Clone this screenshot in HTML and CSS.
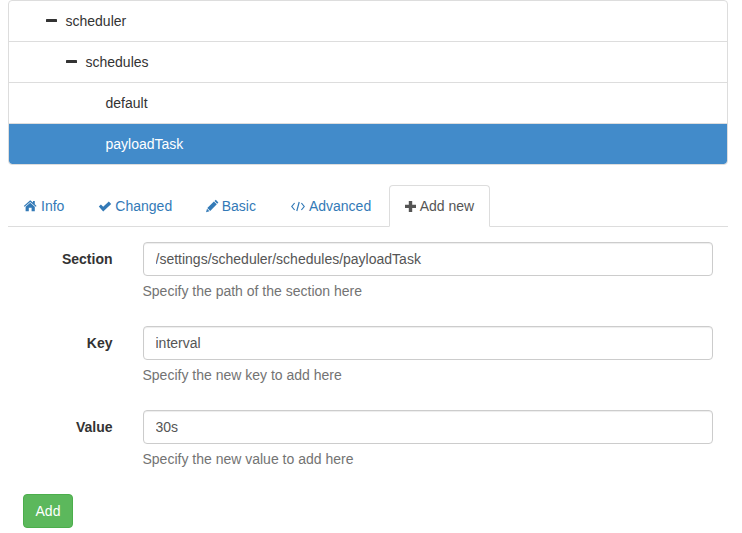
FILE: index.html
```html
<!DOCTYPE html>
<html lang="en">

<head>
    <meta charset="UTF-8">
    <meta name="viewport" content="width=device-width, initial-scale=1.0">
    <title>Settings</title>
    <link rel="stylesheet" href="styles.css">
</head>

<body>
    <!-- Section tree -->
    <ul class="tree">
        <li class="tree-item level-1"><svg class="icon tree-icon" viewBox="0 0 14 14"><rect x="1" y="5" width="11" height="3" rx="0.6"/></svg>scheduler</li>
        <li class="tree-item level-2"><svg class="icon tree-icon" viewBox="0 0 14 14"><rect x="1" y="5" width="11" height="3" rx="0.6"/></svg>schedules</li>
        <li class="tree-item level-3">default</li>
        <li class="tree-item level-3 selected">payloadTask</li>
    </ul>

    <!-- Tabs -->
    <ul class="tabs">
        <li class="tab">
            <a href="#"><svg class="icon icon-info" viewBox="0 0 14 14"><path d="M6.2 1.2 L9 3.6 V2 H10.8 V5.2 L12.6 6.9 L11.8 7.8 L6.2 3 L0.6 7.8 L-0.2 6.9 Z M1.6 7.7 L6.2 3.8 L10.8 7.7 V12.2 H7.6 V8.8 H4.8 V12.2 H1.6 Z"/></svg>Info</a>
        </li>
        <li class="tab">
            <a href="#"><svg class="icon icon-changed" viewBox="0 0 14 14"><path d="M0.8 7.6 L2.9 5.4 L5.2 7.7 L10.8 2.6 L13.2 4.9 L5.2 12.4 Z"/></svg>Changed</a>
        </li>
        <li class="tab">
            <a href="#"><svg class="icon icon-basic" viewBox="0 0 14 14"><path d="M9.8 0.8 L12.4 3.4 L11.2 4.7 L8.5 2.1 Z M7.9 2.5 L10.8 5.3 L4.2 11.9 L1.3 9 Z M1 9.7 L3.5 12.2 L0 13.2 Z"/></svg>Basic</a>
        </li>
        <li class="tab">
            <a href="#"><svg class="icon icon-advanced" viewBox="0 0 14 14"><path d="M3.6 4 L0.8 7.5 L3.6 11 M10.4 4 L13.2 7.5 L10.4 11 M8.2 3 L5.8 12"/></svg>Advanced</a>
        </li>
        <li class="tab active">
            <a href="#"><svg class="icon icon-add" viewBox="0 0 14 14"><path d="M3.8 2 H7.2 V5.8 H11 V9 H7.2 V13 H3.8 V9 H0 V5.8 H3.8 Z"/></svg>Add new</a>
        </li>
    </ul>

    <!-- Add new form -->
    <form class="add-form">
        <div class="form-group">
            <label class="form-label" for="section">Section</label>
            <div class="form-field">
                <input class="form-input" type="text" id="section" value="/settings/scheduler/schedules/payloadTask">
                <p class="help">Specify the path of the section here</p>
            </div>
        </div>
        <div class="form-group">
            <label class="form-label" for="key">Key</label>
            <div class="form-field">
                <input class="form-input" type="text" id="key" value="interval">
                <p class="help">Specify the new key to add here</p>
            </div>
        </div>
        <div class="form-group">
            <label class="form-label" for="value">Value</label>
            <div class="form-field">
                <input class="form-input" type="text" id="value" value="30s">
                <p class="help">Specify the new value to add here</p>
            </div>
        </div>
        <button class="btn-add" type="button">Add</button>
    </form>
</body>

</html>
```

FILE: styles.css
```css
/* General */
* {
    box-sizing: border-box;
}

html,
body {
    margin: 0;
    padding: 0;
    background: #fff;
}

body {
    padding: 0 14px 0 8px;
    color: #333;
    font-family: 'Liberation Sans', Arial, sans-serif;
    font-size: 14px;
    line-height: 20px;
}

.icon {
    display: inline-block;
    width: 14px;
    height: 14px;
    overflow: visible;
    vertical-align: -2px;
    fill: currentColor;
}

/* Tree */
.tree {
    margin: 0 0 20px;
    padding: 0;
    list-style: none;
}

.tree-item {
    height: 42px;
    margin-bottom: -1px;
    padding: 10px 15px;
    border: 1px solid #ddd;
    background: #fff;
}

.tree-item:first-child {
    border-radius: 4px 4px 0 0;
}

.tree-item:last-child {
    margin-bottom: 0;
    border-radius: 0 0 4px 4px;
}

.tree-icon {
    margin-right: 6.5px;
    fill: #333;
}

.level-1 {
    padding-left: 36px;
}

.level-2 {
    padding-left: 56px;
}

.level-3 {
    padding-left: 96.5px;
}

.selected {
    background: #428bca;
    background-clip: padding-box;
    color: #fff;
}

/* Tabs */
.tabs {
    display: flex;
    gap: 2px;
    margin: 0;
    padding: 0;
    border-bottom: 1px solid #ddd;
    list-style: none;
}

.tab {
    margin-bottom: -1px;
}

.tab a {
    display: block;
    padding: 10px 15px;
    border: 1px solid transparent;
    border-radius: 4px 4px 0 0;
    color: #337ab7;
    text-decoration: none;
}

.tab.active a {
    border-color: #ddd #ddd #fff;
    background: #fff;
    color: #555;
}

.icon-info,
.icon-changed {
    margin-right: 3px;
}

.icon-basic {
    margin-right: 1.5px;
}

.icon-advanced {
    margin: 0 4px 0 1px;
    fill: none;
    stroke: currentColor;
    stroke-width: 1.2;
}

.icon-add {
    margin-right: 0.5px;
}

/* Form */
.add-form {
    padding-top: 15px;
}

.form-group {
    display: flex;
    margin-bottom: 15px;
}

.form-label {
    flex: 0 0 120px;
    padding: 7px 15.5px 0 15px;
    font-weight: bold;
    text-align: right;
}

.form-field {
    flex: 1;
    padding: 0 15px;
}

.form-input {
    display: block;
    width: 100%;
    height: 34px;
    padding: 6px 12px 6px 11.5px;
    border: 1px solid #ccc;
    border-radius: 4px;
    box-shadow: inset 0 1px 1px rgba(0, 0, 0, 0.075);
    color: #555;
    font-family: inherit;
    font-size: 14px;
    line-height: 20px;
}

.help {
    margin: 5px 0 10px -0.5px;
    color: #737373;
}

.btn-add {
    display: block;
    width: 50px;
    height: 34px;
    margin-left: 15px;
    padding: 6px 0;
    border: 1px solid #4cae4c;
    border-radius: 4px;
    background: #5cb85c;
    color: #fff;
    font-family: inherit;
    font-size: 14px;
    line-height: 20px;
    cursor: pointer;
}
```
